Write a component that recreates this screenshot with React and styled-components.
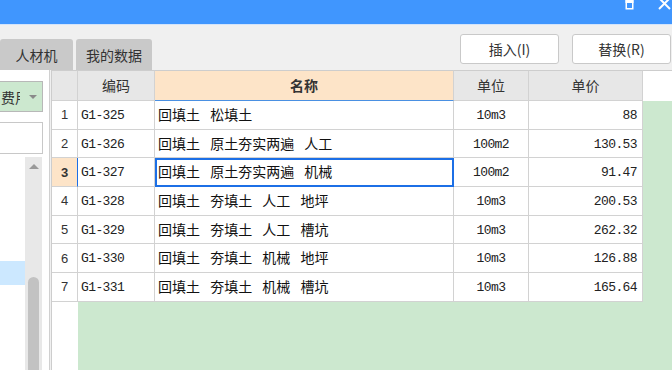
import React from "react";
import styled, { createGlobalStyle } from "styled-components";

const GlobalStyle = createGlobalStyle`
  html, body {
    margin: 0;
    padding: 0;
    background: #f0f0f0;
    font-family: "Noto Sans CJK SC", "Liberation Sans", sans-serif;
  }
  * { box-sizing: border-box; }
`;

const Window = styled.div`
  width: 672px;
  height: 370px;
  overflow: hidden;
  display: flex;
  flex-direction: column;
  background: #f0f0f0;
`;

const TitleBar = styled.div`
  height: 25px;
  flex: none;
  background: #4096fe;
  border-bottom: 1px solid #d3e4fb;
  display: flex;
  justify-content: flex-end;
  align-items: flex-start;
`;

const Toolbar = styled.div`
  height: 45px;
  flex: none;
  display: flex;
  justify-content: space-between;
`;

const Tabs = styled.div`
  align-self: flex-end;
  display: flex;
  gap: 3px;
`;

const Tab = styled.div`
  width: ${p => p.$w}px;
  height: 31px;
  background: #c9c9c9;
  border-radius: 3px 3px 0 0;
  display: flex;
  align-items: center;
  justify-content: center;
  padding-top: 1px;
  font-size: 14px;
  color: #333;
`;

const Actions = styled.div`
  display: flex;
  gap: 13px;
  margin-top: 9px;
  margin-right: 1px;
  align-self: flex-start;
`;

const ActionButton = styled.button`
  width: 99px;
  height: 30px;
  background: #fff;
  border: 1px solid #c9c9c9;
  border-radius: 3px;
  font-family: "Noto Sans CJK SC", "Liberation Sans", sans-serif;
  font-size: 14px;
  color: #333;
  padding: 0;
`;

const Main = styled.div`
  flex: 1;
  display: flex;
  min-height: 0;
`;

const LeftPanel = styled.div`
  width: 50px;
  margin-right: 1px;
  background: #fff;
  border-right: 1px solid #d0d0d0;
  display: flex;
  flex-direction: column;
  overflow: hidden;
`;

const Dropdown = styled.div`
  margin: 11px 0 0 -1px;
  width: 44px;
  height: 31px;
  flex: none;
  background: #cce8cf;
  border: 1px solid #b8b8b8;
  display: flex;
  align-items: center;
`;

const DropText = styled.span`
  width: 19px;
  margin-left: 1px;
  overflow: hidden;
  white-space: nowrap;
  font-size: 14px;
  color: #333;
`;

const DropArrow = styled.span`
  margin-left: 9px;
  width: 0;
  height: 0;
  border-left: 4px solid transparent;
  border-right: 4px solid transparent;
  border-top: 4px solid #8a8a8a;
`;

const SearchBox = styled.div`
  margin: 10px 0 0 -1px;
  width: 44px;
  height: 32px;
  flex: none;
  background: #fff;
  border: 1px solid #c8c8c8;
`;

const ListArea = styled.div`
  flex: 1;
  margin-top: 3px;
  display: flex;
`;

const ListBody = styled.div`
  width: 25px;
`;

const ListRow = styled.div`
  height: 24px;
  margin-top: ${p => p.$top}px;
  background: ${p => (p.$selected ? "#cce8ff" : "transparent")};
`;

const ScrollTrack = styled.div`
  width: 17px;
  background: #e8e8e8;
  display: flex;
  flex-direction: column;
  align-items: center;
`;

const ScrollArrow = styled.span`
  margin-top: 7px;
  width: 0;
  height: 0;
  border-left: 5px solid transparent;
  border-right: 5px solid transparent;
  border-bottom: 5px solid #9a9a9a;
`;

const ScrollThumb = styled.div`
  margin-top: 108px;
  width: 11px;
  flex: 1;
  background: #c2c2c2;
  border-radius: 6px 6px 0 0;
`;

const GridArea = styled.div`
  flex: 1;
  display: grid;
  grid-template-columns: 26px 77px 299px 75px 114px 1fr;
  grid-template-rows: 31px repeat(7, 28.7px) 1fr;
  background: #cce8cf;
  border-left: 1px solid #cdcdcd;
`;

const Cell = styled.div`
  border-right: 1px solid #d2d2d2;
  border-bottom: 1px solid #d2d2d2;
  background: ${p => p.$bg || "#fff"};
  display: flex;
  align-items: center;
  justify-content: ${p => p.$align || "flex-start"};
  padding: 0 ${p => p.$pad ?? 3}px;
  white-space: nowrap;
  overflow: hidden;
  color: #222;
`;

const HeadCell = styled(Cell)`
  border-top: 1px solid #cdcdcd;
  background: ${p => (p.$active ? "#fde4c8" : "#e7e7e7")};
  border-bottom: 1px solid ${p => (p.$active ? "#4a90e2" : "#d2d2d2")};
  justify-content: center;
  padding-bottom: 2px;
  font-size: 14px;
  font-weight: ${p => (p.$active ? "bold" : "normal")};
  color: #333;
`;

const HeadFill = styled.div`
  background: #fff;
  border-top: 1px solid #cdcdcd;
`;

const NumCell = styled(Cell)`
  justify-content: center;
  padding: 0;
  font-family: "Liberation Sans", sans-serif;
  font-size: 13px;
  font-weight: ${p => (p.$active ? "bold" : "normal")};
  background: ${p => (p.$active ? "#fde4c8" : "#fff")};
  border-right-color: ${p => (p.$active ? "#1c6fe6" : "#d2d2d2")};
  color: #333;
`;

const MonoCell = styled(Cell)`
  font-family: "Liberation Mono", monospace;
  font-size: 13px;
  letter-spacing: -0.6px;
  padding-top: 1px;
`;

const NameCell = styled(Cell)`
  font-size: 14px;
  word-spacing: 7px;
  padding-left: 3px;
  padding-bottom: 2px;
  outline: ${p => (p.$active ? "2px solid #1c6fe6" : "none")};
  outline-offset: -2px;
  color: #111;
`;

const RowFill = styled.div``;

const BottomNum = styled.div`
  background: #fff;
`;

const BottomFill = styled.div`
  grid-column: 2 / -1;
`;

const rows = [
  ["G1-325", "回填土 松填土", "10m3", "88"],
  ["G1-326", "回填土 原土夯实两遍 人工", "100m2", "130.53"],
  ["G1-327", "回填土 原土夯实两遍 机械", "100m2", "91.47"],
  ["G1-328", "回填土 夯填土 人工 地坪", "10m3", "200.53"],
  ["G1-329", "回填土 夯填土 人工 槽坑", "10m3", "262.32"],
  ["G1-330", "回填土 夯填土 机械 地坪", "10m3", "126.88"],
  ["G1-331", "回填土 夯填土 机械 槽坑", "10m3", "165.64"],
];

const activeRow = 2;

function TitleIcons() {
  return (
    <svg width="50" height="14" viewBox="0 0 50 14">
      <rect x="4.25" y="-1" width="6.5" height="9.75" fill="none" stroke="#fff" strokeWidth="1.5" />
      <rect x="3.5" y="-1" width="8" height="4" fill="#fff" />
      <line x1="37" y1="-2" x2="48" y2="9" stroke="#fff" strokeWidth="2" />
      <line x1="48" y1="-2" x2="37" y2="9" stroke="#fff" strokeWidth="2" />
    </svg>
  );
}

export default function App() {
  return (
    <Window>
      <GlobalStyle />
      <TitleBar>
        <TitleIcons />
      </TitleBar>
      <Toolbar>
        <Tabs>
          <Tab $w={73}>人材机</Tab>
          <Tab $w={76}>我的数据</Tab>
        </Tabs>
        <Actions>
          <ActionButton>插入(I)</ActionButton>
          <ActionButton>替换(R)</ActionButton>
        </Actions>
      </Toolbar>
      <Main>
        <LeftPanel>
          <Dropdown>
            <DropText>费用</DropText>
            <DropArrow />
          </Dropdown>
          <SearchBox />
          <ListArea>
            <ListBody>
              <ListRow $top={104} $selected />
            </ListBody>
            <ScrollTrack>
              <ScrollArrow />
              <ScrollThumb />
            </ScrollTrack>
          </ListArea>
        </LeftPanel>
        <GridArea>
          <HeadCell />
          <HeadCell>编码</HeadCell>
          <HeadCell $active>名称</HeadCell>
          <HeadCell>单位</HeadCell>
          <HeadCell>单价</HeadCell>
          <HeadFill />
          {rows.map((r, i) => (
            <React.Fragment key={r[0]}>
              <NumCell $active={i === activeRow}>{i + 1}</NumCell>
              <MonoCell>{r[0]}</MonoCell>
              <NameCell $active={i === activeRow}>{r[1]}</NameCell>
              <MonoCell $align="center">{r[2]}</MonoCell>
              <MonoCell $align="flex-end" $pad={5}>{r[3]}</MonoCell>
              <RowFill />
            </React.Fragment>
          ))}
          <BottomNum />
          <BottomFill />
        </GridArea>
      </Main>
    </Window>
  );
}
